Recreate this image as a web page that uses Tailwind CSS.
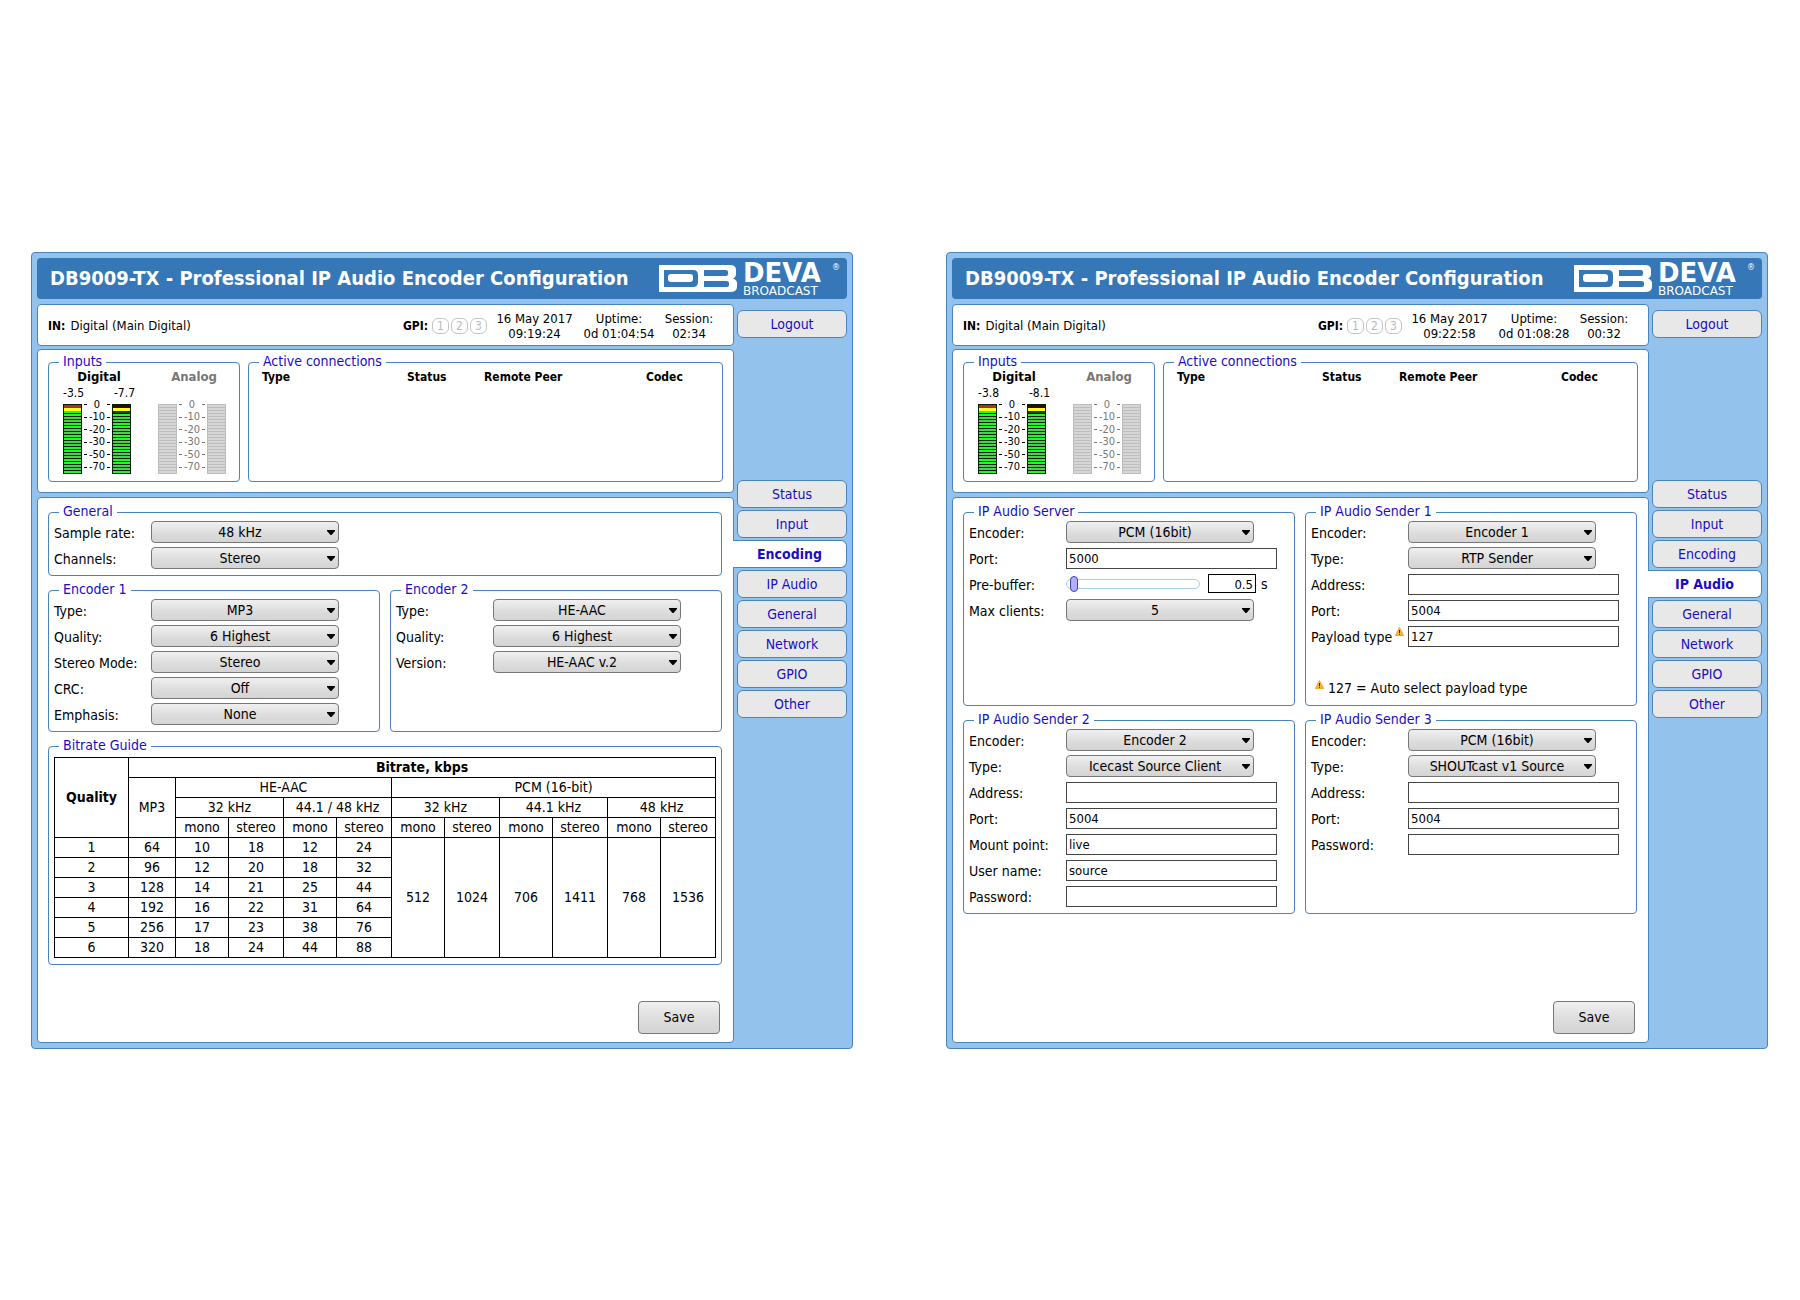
<!DOCTYPE html>
<html lang="en">
<head>
<meta charset="utf-8">
<title>DB9009-TX - Professional IP Audio Encoder Configuration</title>
<script src="https://cdn.jsdelivr.net/npm/@tailwindcss/browser@4"></script>
</head>
<body class="bg-white text-black text-sm font-['DejaVu_Sans_Condensed','DejaVu_Sans',sans-serif]">
<main id="app" class="min-h-screen grid grid-cols-2 content-center gap-[93px] pl-[31px] pr-8"></main>

<script>
let uid = 0;
const range = n => Array.from({ length: n }, (_, i) => i);

const logo = `
  <div class="flex items-start gap-[6px] text-white">
    <svg class="w-[78px] h-[27px] shrink-0" viewBox="0 0 78 27" role="img" aria-label="DB">
      <path fill="#fff" fill-rule="evenodd" d="M0 0H71Q77 0 77 5V9Q77 12 74 13.500Q78 15 78 18V22Q78 27 71 27H0ZM5 5V22H34Q39 22 39 17V10Q39 5 34 5ZM45 5V11H67Q69 11 69 9V7Q69 5 67 5ZM45 16V22H67Q70 22 70 20V18Q70 16 67 16Z"/>
      <rect x="9" y="9" width="25" height="8" rx="3" fill="#fff"/>
    </svg>
    <div class="-mt-px flex w-[97px] flex-col font-['DejaVu_Sans',sans-serif]">
      <div class="flex items-start justify-between"><span class="text-[26px] leading-[19px] font-bold">DEVA</span><span class="text-[8px] leading-2">®</span></div>
      <span class="pt-1 text-xs leading-[9px]">BROADCAST</span>
    </div>
  </div>`;

const warn = `
  <svg class="w-[9px] h-[9px] shrink-0" viewBox="0 0 9 9" role="img" aria-label="Note">
    <path d="M4.500.5 8.700 8.500H.3Z" fill="#f9b233" stroke="#f0a020" stroke-width=".8" stroke-linejoin="round"/>
    <path d="M4.500 3V6M4.500 6.800V7.800" stroke="#222" stroke-width="1"/>
  </svg>`;

const group = (title, body, cls = '') => `
  <fieldset class="min-w-0 rounded border border-[#4a84ba] px-[5px] pb-[6px] ${cls}">
    <legend class="ml-[5px] h-[17px] px-1 leading-[15px] text-[#1a0dc4]">${title}</legend>
    ${body}
  </fieldset>`;

const rows = items => `<div class="flex flex-col gap-1">${items.join('')}</div>`;

const row = (label, id, control) => `
  <div class="flex h-[22px] items-end">
    <label for="${id}" class="flex w-[97px] shrink-0 self-center whitespace-nowrap pt-[2px] leading-5">${label}</label>${control}
  </div>`;

const select = (label, value) => {
  const id = 'f' + (++uid);
  return row(label, id, `
    <div class="relative w-[188px]">
      <select id="${id}" class="block h-[22px] w-full appearance-none rounded border border-[#777] bg-linear-to-b from-[#f0f0f0] from-0% via-[#dddddd] via-55% to-[#d4d4d4] to-100% pr-[10px] text-center leading-5"><option>${value}</option></select>
      <svg class="pointer-events-none absolute right-1 top-[9px] h-[5px] w-2" viewBox="0 0 8 5" aria-hidden="true"><path d="M0 0H8V1L4.500 5H3.500L0 1Z"/></svg>
    </div>`);
};

const input = (label, value, type = 'text', icon = '') => {
  const id = 'f' + (++uid);
  return row(label + icon, id, `<input id="${id}" type="${type}" value="${value}" class="h-[21px] w-[211px] border border-[#444] bg-white px-[2px] pt-px text-[13px]">`);
};

const prebuffer = () => {
  const id = 'f' + (++uid);
  return `
  <div class="flex h-[22px] items-center">
    <label for="${id}" class="w-[97px] shrink-0 whitespace-nowrap pt-[2px] leading-5">Pre-buffer:</label>
    <input id="${id}" type="range" min="0" max="20" step="0.5" value="0.5" class="h-4 w-[134px] appearance-none bg-transparent [&::-webkit-slider-runnable-track]:h-[10px] [&::-webkit-slider-runnable-track]:rounded-full [&::-webkit-slider-runnable-track]:border [&::-webkit-slider-runnable-track]:border-[#a9cbea] [&::-webkit-slider-thumb]:-mt-1 [&::-webkit-slider-thumb]:h-4 [&::-webkit-slider-thumb]:w-2 [&::-webkit-slider-thumb]:appearance-none [&::-webkit-slider-thumb]:rounded-full [&::-webkit-slider-thumb]:border [&::-webkit-slider-thumb]:border-[#4040b8] [&::-webkit-slider-thumb]:bg-[#b0b0ff]">
    <input type="text" aria-label="Pre-buffer seconds" value="0.5" class="ml-2 mr-[5px] h-[19px] w-12 border border-black px-[2px] pt-px text-right text-[13px]">
    <span>s</span>
  </div>`;
};

const bar = (kind) => {
  const fill = i => kind === 'off' ? '#d6d6d6'
    : i === 0 ? (kind === 'l' ? '#b92a22' : '#3a0508')
    : i === 1 ? '#ffff20'
    : i === 2 && kind === 'r' ? '#17401a'
    : i % 4 < 2 ? '#4fcf4f' : '#25f52a';
  return `<svg class="h-[70px] w-[19px]" viewBox="0 0 19 70" aria-hidden="true"><rect width="19" height="70" fill="${kind === 'off' ? '#bdbdbd' : '#062006'}"/>${range(23).map(i => `<rect x="1" y="${1 + i * 3}" width="17" height="${i < 2 && kind !== 'off' ? 3 : 2}" fill="${fill(i)}"/>`).join('')}</svg>`;
};

const meter = (name, l, r, off) => `
  <div class="w-[72px] ${off ? 'text-[#777]' : ''}">
    <div class="text-center text-[13px] leading-4 font-bold">${name}</div>
    <div class="flex h-[19px] justify-between text-xs leading-[17px]"><span>${l}</span><span>${r}</span></div>
    <div class="flex">
      ${bar(off ? 'off' : 'l')}
      <div class="-mt-[5px] flex h-[75px] w-[30px] flex-col justify-between text-[11px] leading-3">
        ${['0', '-10', '-20', '-30', '-50', '-70'].map(v => `<div class="flex items-center justify-between px-[2px]"><i class="h-px w-[3px] bg-current"></i><span>${v}</span><i class="h-px w-[3px] bg-current"></i></div>`).join('')}
      </div>
      ${bar(off ? 'off' : 'r')}
    </div>
  </div>`;

const cell = 'border border-black p-0 text-center font-normal';
const th = (t, c = 1, r = 1, bold = false) => `<th colspan="${c}" rowspan="${r}" class="border border-black p-0 text-center ${bold ? 'font-bold' : 'font-normal'}">${t}</th>`;
const td = (t, r = 1) => `<td rowspan="${r}" class="${cell}">${t}</td>`;
const tr = h => `<tr class="h-5">${h}</tr>`;
const rates = [[64,10,18,12,24],[96,12,20,18,32],[128,14,21,25,44],[192,16,22,31,64],[256,17,23,38,76],[320,18,24,44,88]];
const guide = `
  <table class="mt-[2px] w-full table-fixed border-collapse leading-[19px]">
    <colgroup><col class="w-[74px]"><col class="w-[47px]">${'<col class="w-[53px]"><col class="w-[55px]">'.repeat(5)}</colgroup>
    <thead>
      ${tr(th('Quality', 1, 4, true) + th('Bitrate, kbps', 11, 1, true))}
      ${tr(th('MP3', 1, 3) + th('HE-AAC', 4) + th('PCM (16-bit)', 6))}
      ${tr(th('32 kHz', 2) + th('44.1 / 48 kHz', 2) + th('32 kHz', 2) + th('44.1 kHz', 2) + th('48 kHz', 2))}
      ${tr((th('mono') + th('stereo')).repeat(5))}
    </thead>
    <tbody>
      ${rates.map((v, i) => tr(td(i + 1) + v.map(x => td(x)).join('') + (i ? '' : [512,1024,706,1411,768,1536].map(x => td(x, 6)).join('')))).join('')}
    </tbody>
  </table>`;

const encoding = () => `
  ${group('General', rows([select('Sample rate:', '48 kHz'), select('Channels:', 'Stereo')]))}
  <div class="grid grid-cols-2 gap-[10px]">
    ${group('Encoder 1', rows([select('Type:', 'MP3'), select('Quality:', '6 Highest'), select('Stereo Mode:', 'Stereo'), select('CRC:', 'Off'), select('Emphasis:', 'None')]))}
    ${group('Encoder 2', rows([select('Type:', 'HE-AAC'), select('Quality:', '6 Highest'), select('Version:', 'HE-AAC v.2')]))}
  </div>
  ${group('Bitrate Guide', guide)}`;

const ipAudio = () => `
  <div class="grid grid-cols-2 gap-x-[10px] gap-y-[6px]">
    ${group('IP Audio Server', rows([select('Encoder:', 'PCM (16bit)'), input('Port:', '5000'), prebuffer(), select('Max clients:', '5')]))}
    ${group('IP Audio Sender 1', rows([select('Encoder:', 'Encoder 1'), select('Type:', 'RTP Sender'), input('Address:', ''), input('Port:', '5004'), input('Payload type', '127', 'text', `<span class="pl-[3px]">${warn}</span>`),
      `<div class="mt-[26px] flex h-[22px] gap-1 pl-1 leading-[22px]"><span class="pt-[3px]">${warn}</span>127 = Auto select payload type</div>`]))}
    ${group('IP Audio Sender 2', rows([select('Encoder:', 'Encoder 2'), select('Type:', 'Icecast Source Client'), input('Address:', ''), input('Port:', '5004'), input('Mount point:', 'live'), input('User name:', 'source'), input('Password:', '', 'password')]))}
    ${group('IP Audio Sender 3', rows([select('Encoder:', 'PCM (16bit)'), select('Type:', 'SHOUTcast v1 Source'), input('Address:', ''), input('Port:', '5004'), input('Password:', '', 'password')]))}
  </div>`;

const tabs = ['Status', 'Input', 'Encoding', 'IP Audio', 'General', 'Network', 'GPIO', 'Other'];
const link = (t, on) => on
  ? `<a href="#" aria-current="page" class="-ml-1 flex h-7 items-center justify-center rounded-r-md border border-l-0 border-[#4a84ba] bg-white font-bold text-[#1a0dc4]">${t}</a>`
  : `<a href="#" class="flex h-7 items-center justify-center rounded-md border border-[#4a84ba] bg-[#e8e8e8] text-[#1a0dc4]">${t}</a>`;

const panel = p => `
  <section class="flex flex-col rounded border border-[#4a84ba] bg-[#93c3ed] p-[5px]">
    <header class="flex h-[41px] items-start justify-between rounded bg-[#3577b7] pl-[13px] pr-[7px] pt-[7px]">
      <h1 class="whitespace-nowrap text-xl leading-[27px] font-bold text-white">DB9009-TX - Professional IP Audio Encoder Configuration</h1>
      ${logo}
    </header>
    <div class="mt-[5px] flex flex-1 gap-[3px]">
      <div class="flex min-w-0 flex-1 flex-col">
        <div class="flex h-[42px] items-center rounded border border-[#4a84ba] bg-white pl-[10px] pr-4 pt-[2px] text-[13px] leading-[15px] whitespace-nowrap">
          <b class="text-xs">IN:</b><span class="ml-[5px]">Digital (Main Digital)</span>
          <b class="ml-auto text-xs">GPI:</b>
          <div class="ml-1 flex gap-[2px]">${[1, 2, 3].map(n => `<span class="flex h-4 w-[17px] items-center justify-center rounded-md border border-[#c4c4c4] text-xs text-[#bbb]">${n}</span>`).join('')}</div>
          <div class="ml-[5px] w-[85px] text-center">16 May 2017<br>${p.time}</div>
          <div class="w-[84px] text-center">Uptime:<br>${p.uptime}</div>
          <div class="w-14 text-center">Session:<br>${p.session}</div>
        </div>
        <div class="mt-[3px] flex h-[144px] gap-2 rounded border border-[#4a84ba] bg-white px-[10px] pb-[10px] pt-1">
          ${group('Inputs', `<div class="-mt-[2px] flex justify-between pl-[9px] pr-1">${meter('Digital', p.l, p.r)}${meter('Analog', '', '', true)}</div>`, 'w-[192px]')}
          ${group('Active connections', `
            <table class="-mt-[2px] ml-2 w-[450px] table-fixed text-left text-xs leading-4">
              <thead><tr><th class="w-[145px]">Type</th><th class="w-[77px]">Status</th><th class="w-[162px]">Remote Peer</th><th>Codec</th></tr></thead>
            </table>`, 'flex-1')}
        </div>
        <div class="mt-1 flex flex-1 flex-col gap-[6px] rounded border border-[#4a84ba] bg-white pb-2 pl-[10px] pr-[11px] pt-[6px]">
          ${p.body()}
          <div class="mt-auto flex justify-end pr-[2px] pt-[30px]">
            <button type="button" class="h-[33px] w-[82px] rounded border border-[#777] bg-linear-to-b from-[#f0f0f0] from-0% via-[#dddddd] via-55% to-[#d4d4d4] to-100%">Save</button>
          </div>
        </div>
      </div>
      <nav class="flex w-[110px] flex-col gap-[2px] pt-[6px]">
        <div class="mb-[140px]">${link('Logout')}</div>
        ${tabs.map(t => link(t, t === p.tab)).join('')}
      </nav>
    </div>
  </section>`;

document.getElementById('app').innerHTML = [
  { tab: 'Encoding', time: '09:19:24', uptime: '0d 01:04:54', session: '02:34', l: '-3.5', r: '-7.7', body: encoding },
  { tab: 'IP Audio', time: '09:22:58', uptime: '0d 01:08:28', session: '00:32', l: '-3.8', r: '-8.1', body: ipAudio },
].map(panel).join('');
</script>
</body>
</html>
